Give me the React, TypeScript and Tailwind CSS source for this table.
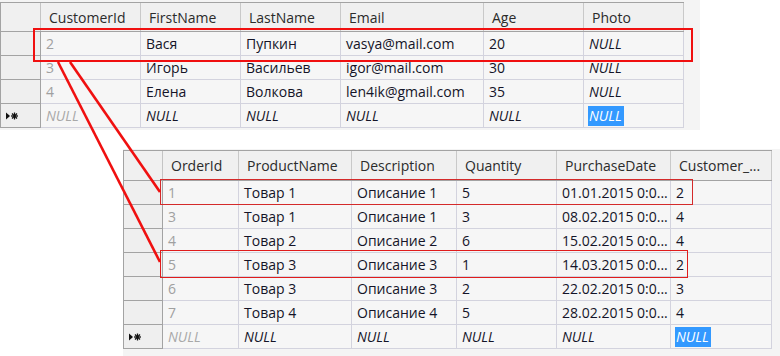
import React from "react";

type Col = { name: string; w: string };

const customerCols: Col[] = [
  { name: "CustomerId", w: "w-[100px]" },
  { name: "FirstName", w: "w-[100px]" },
  { name: "LastName", w: "w-[100px]" },
  { name: "Email", w: "w-[143px]" },
  { name: "Age", w: "w-[100px]" },
  { name: "Photo", w: "w-[100px]" },
];

const customerRows: string[][] = [
  ["2", "Вася", "Пупкин", "vasya@mail.com", "20", "NULL"],
  ["3", "Игорь", "Васильев", "igor@mail.com", "30", "NULL"],
  ["4", "Елена", "Волкова", "len4ik@gmail.com", "35", "NULL"],
];

const orderCols: Col[] = [
  { name: "OrderId", w: "w-[76px]" },
  { name: "ProductName", w: "w-[113px]" },
  { name: "Description", w: "w-[105px]" },
  { name: "Quantity", w: "w-[100px]" },
  { name: "PurchaseDate", w: "w-[114px]" },
  { name: "Customer_...", w: "w-[101px]" },
];

const orderRows: string[][] = [
  ["1", "Товар 1", "Описание 1", "5", "01.01.2015 0:0...", "2"],
  ["3", "Товар 1", "Описание 1", "3", "08.02.2015 0:0...", "4"],
  ["4", "Товар 2", "Описание 2", "6", "15.02.2015 0:0...", "4"],
  ["5", "Товар 3", "Описание 3", "1", "14.03.2015 0:0...", "2"],
  ["6", "Товар 3", "Описание 3", "2", "22.02.2015 0:0...", "3"],
  ["7", "Товар 4", "Описание 4", "5", "28.02.2015 0:0...", "4"],
];

function NewRowMarker() {
  return (
    <svg width="14" height="8" viewBox="0 0 14 8" aria-hidden>
      <path d="M0 0.5 L4 4 L0 7.5 Z" fill="#111" />
      <g stroke="#111" strokeWidth="1.3">
        <line x1="8.5" y1="0.5" x2="8.5" y2="7.5" />
        <line x1="5" y1="4" x2="12" y2="4" />
        <line x1="6" y1="1.5" x2="11" y2="6.5" />
        <line x1="11" y1="1.5" x2="6" y2="6.5" />
      </g>
    </svg>
  );
}

function Grid({ cols, rows, rowHeaderW, headerH }: { cols: Col[]; rows: string[][]; rowHeaderW: string; headerH: string }) {
  return (
    <div className="border-l border-t border-[#a3a3a3] w-fit text-[14px] leading-none">
      <div className={`flex ${headerH} border-b border-[#a3a3a3] bg-[#f0f0f0]`}>
        <div className={`${rowHeaderW} border-r border-[#c4c4c4]`} />
        {cols.map((c) => (
          <div key={c.name} className={`${c.w} border-r border-[#c9c9c9] flex items-center pl-[8px] pt-[1px] text-[#2b2b2b] whitespace-nowrap overflow-hidden`}>
            {c.name}
          </div>
        ))}
      </div>
      {rows.map((r, i) => (
        <div key={i} className="flex h-[24px]">
          <div className={`${rowHeaderW} bg-[#efefef] border-r border-b border-[#a3a3a3]`} />
          {r.map((v, j) => (
            <div
              key={j}
              className={`${cols[j].w} bg-[#f6f6f6] border-r border-b border-[#d3d3de] flex items-center pl-[5px] whitespace-nowrap overflow-hidden ${
                j === 0 ? "text-[#a0a0a0]" : "text-[#141428]"
              } ${v === "NULL" ? "italic" : ""}`}
            >
              {v}
            </div>
          ))}
        </div>
      ))}
      <div className="flex h-[24px]">
        <div className={`${rowHeaderW} bg-[#efefef] border-r border-b border-[#a3a3a3] flex items-center pl-[5px]`}>
          <NewRowMarker />
        </div>
        {cols.map((c, j) => (
          <div
            key={c.name}
            className={`${c.w} bg-[#f6f6f6] border-r border-b border-[#d3d3de] flex items-center pl-[4px] italic whitespace-nowrap ${
              j === 0 ? "text-[#a8a8a8]" : "text-[#141428]"
            }`}
          >
            {j === cols.length - 1 ? (
              <span className="bg-[#3399ff] text-white h-[20px] flex items-center px-[1px] pr-[2px]">NULL</span>
            ) : (
              <span className="pl-[1px]">NULL</span>
            )}
          </div>
        ))}
      </div>
    </div>
  );
}

export default function App() {
  return (
    <div className="relative w-[780px] h-[356px] bg-white overflow-hidden font-['Open_Sans',sans-serif]">
      <div className="w-[700px] h-[130px] bg-[#f4f4f4] pt-[2px]">
        <Grid cols={customerCols} rows={customerRows} rowHeaderW="w-[40px]" headerH="h-[29px]" />
      </div>

      <div className="mt-[19px] ml-[123px] w-[657px] h-[207px] bg-[#f4f4f4] pt-[1px]">
        <Grid cols={orderCols} rows={orderRows} rowHeaderW="w-[39px]" headerH="h-[30px]" />
      </div>

      {/* annotations */}
      <div className="absolute left-[33px] top-[28px] w-[660px] h-[34px] border-2 border-[#f01010]" />
      <div className="absolute left-[160px] top-[179px] w-[533px] h-[26px] border border-[#d42a2a]" />
      <div className="absolute left-[160px] top-[250px] w-[528px] h-[28px] border border-[#e01c1c]" />
      <svg className="absolute left-0 top-0" width="780" height="356" aria-hidden>
        <line x1="58" y1="62" x2="160" y2="262" stroke="#f01010" strokeWidth="2.6" />
        <line x1="70" y1="62" x2="160" y2="192" stroke="#f01010" strokeWidth="2.6" />
      </svg>
    </div>
  );
}
